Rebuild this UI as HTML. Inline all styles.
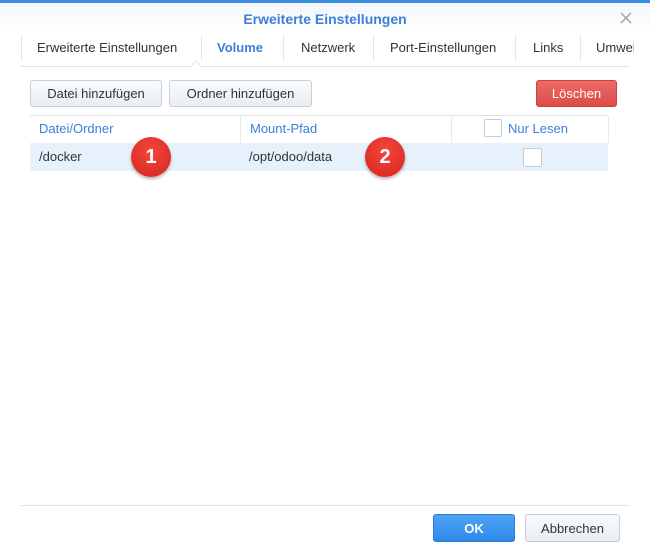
<!DOCTYPE html>
<html><head><style>
*{margin:0;padding:0;box-sizing:border-box}
body{width:650px;height:550px;background:#fff;font-family:"Liberation Sans",sans-serif;font-size:13px;color:#333;position:relative;overflow:hidden}
.a{position:absolute}
.topbar{left:0;top:0;width:650px;height:3px;background:#3b8be0}
.hdr{left:0;top:3px;width:650px;height:30px;background:linear-gradient(#f3f7fb,#fff)}
.title{left:0;top:11px;width:650px;text-align:center;color:#3b7fd8;font-weight:bold;font-size:14px}
.tab{top:40px;font-size:13px;color:#333}
.sep{top:35px;width:1px;height:26px;background:#e2e6ea}
.btn{border:1px solid #c7ced6;border-radius:3px;background:linear-gradient(#f9fbfc,#e9eef3);text-align:center;line-height:25px;font-size:13px;color:#333}
.th{color:#3b7fd8;top:121px}
.circ{width:40px;height:40px;border-radius:50%;background:radial-gradient(circle at 50% 35%,#f2463d,#d7261e);color:#fff;font-size:20px;font-weight:bold;text-align:center;line-height:40px;box-shadow:0 2px 3px rgba(0,0,0,.3)}
.cb{width:18px;height:18px;border:1px solid #c5ccd3;background:#fff;border-radius:2px}
</style></head><body>
<div class="a topbar"></div>
<div class="a hdr"></div>
<div class="a title">Erweiterte Einstellungen</div>
<svg class="a" style="left:620px;top:12px" width="12" height="12"><path d="M1 1L11 11M11 1L1 11" stroke="#a0a4a8" stroke-width="1.5"/></svg>
<div class="a sep" style="left:21px"></div>
<div class="a tab" style="left:37px">Erweiterte Einstellungen</div>
<div class="a sep" style="left:201px"></div>
<div class="a tab" style="left:217px;color:#3b7fd8;font-weight:bold">Volume</div>
<div class="a sep" style="left:283px"></div>
<div class="a tab" style="left:301px">Netzwerk</div>
<div class="a sep" style="left:373px"></div>
<div class="a tab" style="left:390px">Port-Einstellungen</div>
<div class="a sep" style="left:515px"></div>
<div class="a tab" style="left:533px">Links</div>
<div class="a sep" style="left:580px"></div>
<div class="a tab" style="left:596px;width:38px;overflow:hidden;white-space:nowrap">Umwelt</div>
<div class="a" style="left:20px;top:66px;width:609px;height:1px;background:#dde2e7"></div>
<div class="a" style="left:192px;top:62px;width:8px;height:8px;background:#fff;border-left:1px solid #dde2e7;border-top:1px solid #dde2e7;transform:rotate(45deg)"></div>
<div class="a btn" style="left:30px;top:80px;width:132px;height:27px">Datei hinzufügen</div>
<div class="a btn" style="left:169px;top:80px;width:143px;height:27px">Ordner hinzufügen</div>
<div class="a btn" style="left:536px;top:80px;width:81px;height:27px;background:linear-gradient(#ee6a66,#dc4c48);border-color:#c94440;color:#fff">Löschen</div>
<div class="a" style="left:30px;top:115px;width:578px;height:1px;background:#dde2e7"></div>
<div class="a" style="left:240px;top:116px;width:1px;height:27px;background:#e5e8ec"></div>
<div class="a" style="left:451px;top:116px;width:1px;height:27px;background:#e5e8ec"></div>
<div class="a" style="left:608px;top:116px;width:1px;height:27px;background:#e5e8ec"></div>
<div class="a th" style="left:39px">Datei/Ordner</div>
<div class="a th" style="left:250px">Mount-Pfad</div>
<div class="a cb" style="left:484px;top:119px"></div>
<div class="a th" style="left:508px">Nur Lesen</div>
<div class="a" style="left:30px;top:143px;width:578px;height:28px;background:#e6f1fb"></div>
<div class="a" style="left:39px;top:149px">/docker</div>
<div class="a" style="left:249px;top:149px">/opt/odoo/data</div>
<div class="a cb" style="left:523px;top:148px;width:19px;height:19px"></div>
<div class="a circ" style="left:131px;top:137px">1</div>
<div class="a circ" style="left:365px;top:137px">2</div>
<div class="a" style="left:20px;top:505px;width:609px;height:1px;background:#dde2e7"></div>
<div class="a btn" style="left:433px;top:514px;width:82px;height:28px;line-height:27px;background:linear-gradient(#4da3f5,#2f8ae8);border-color:#2b7fd8;color:#fff;font-weight:bold">OK</div>
<div class="a btn" style="left:525px;top:514px;width:95px;height:28px;line-height:27px">Abbrechen</div>
</body></html>
